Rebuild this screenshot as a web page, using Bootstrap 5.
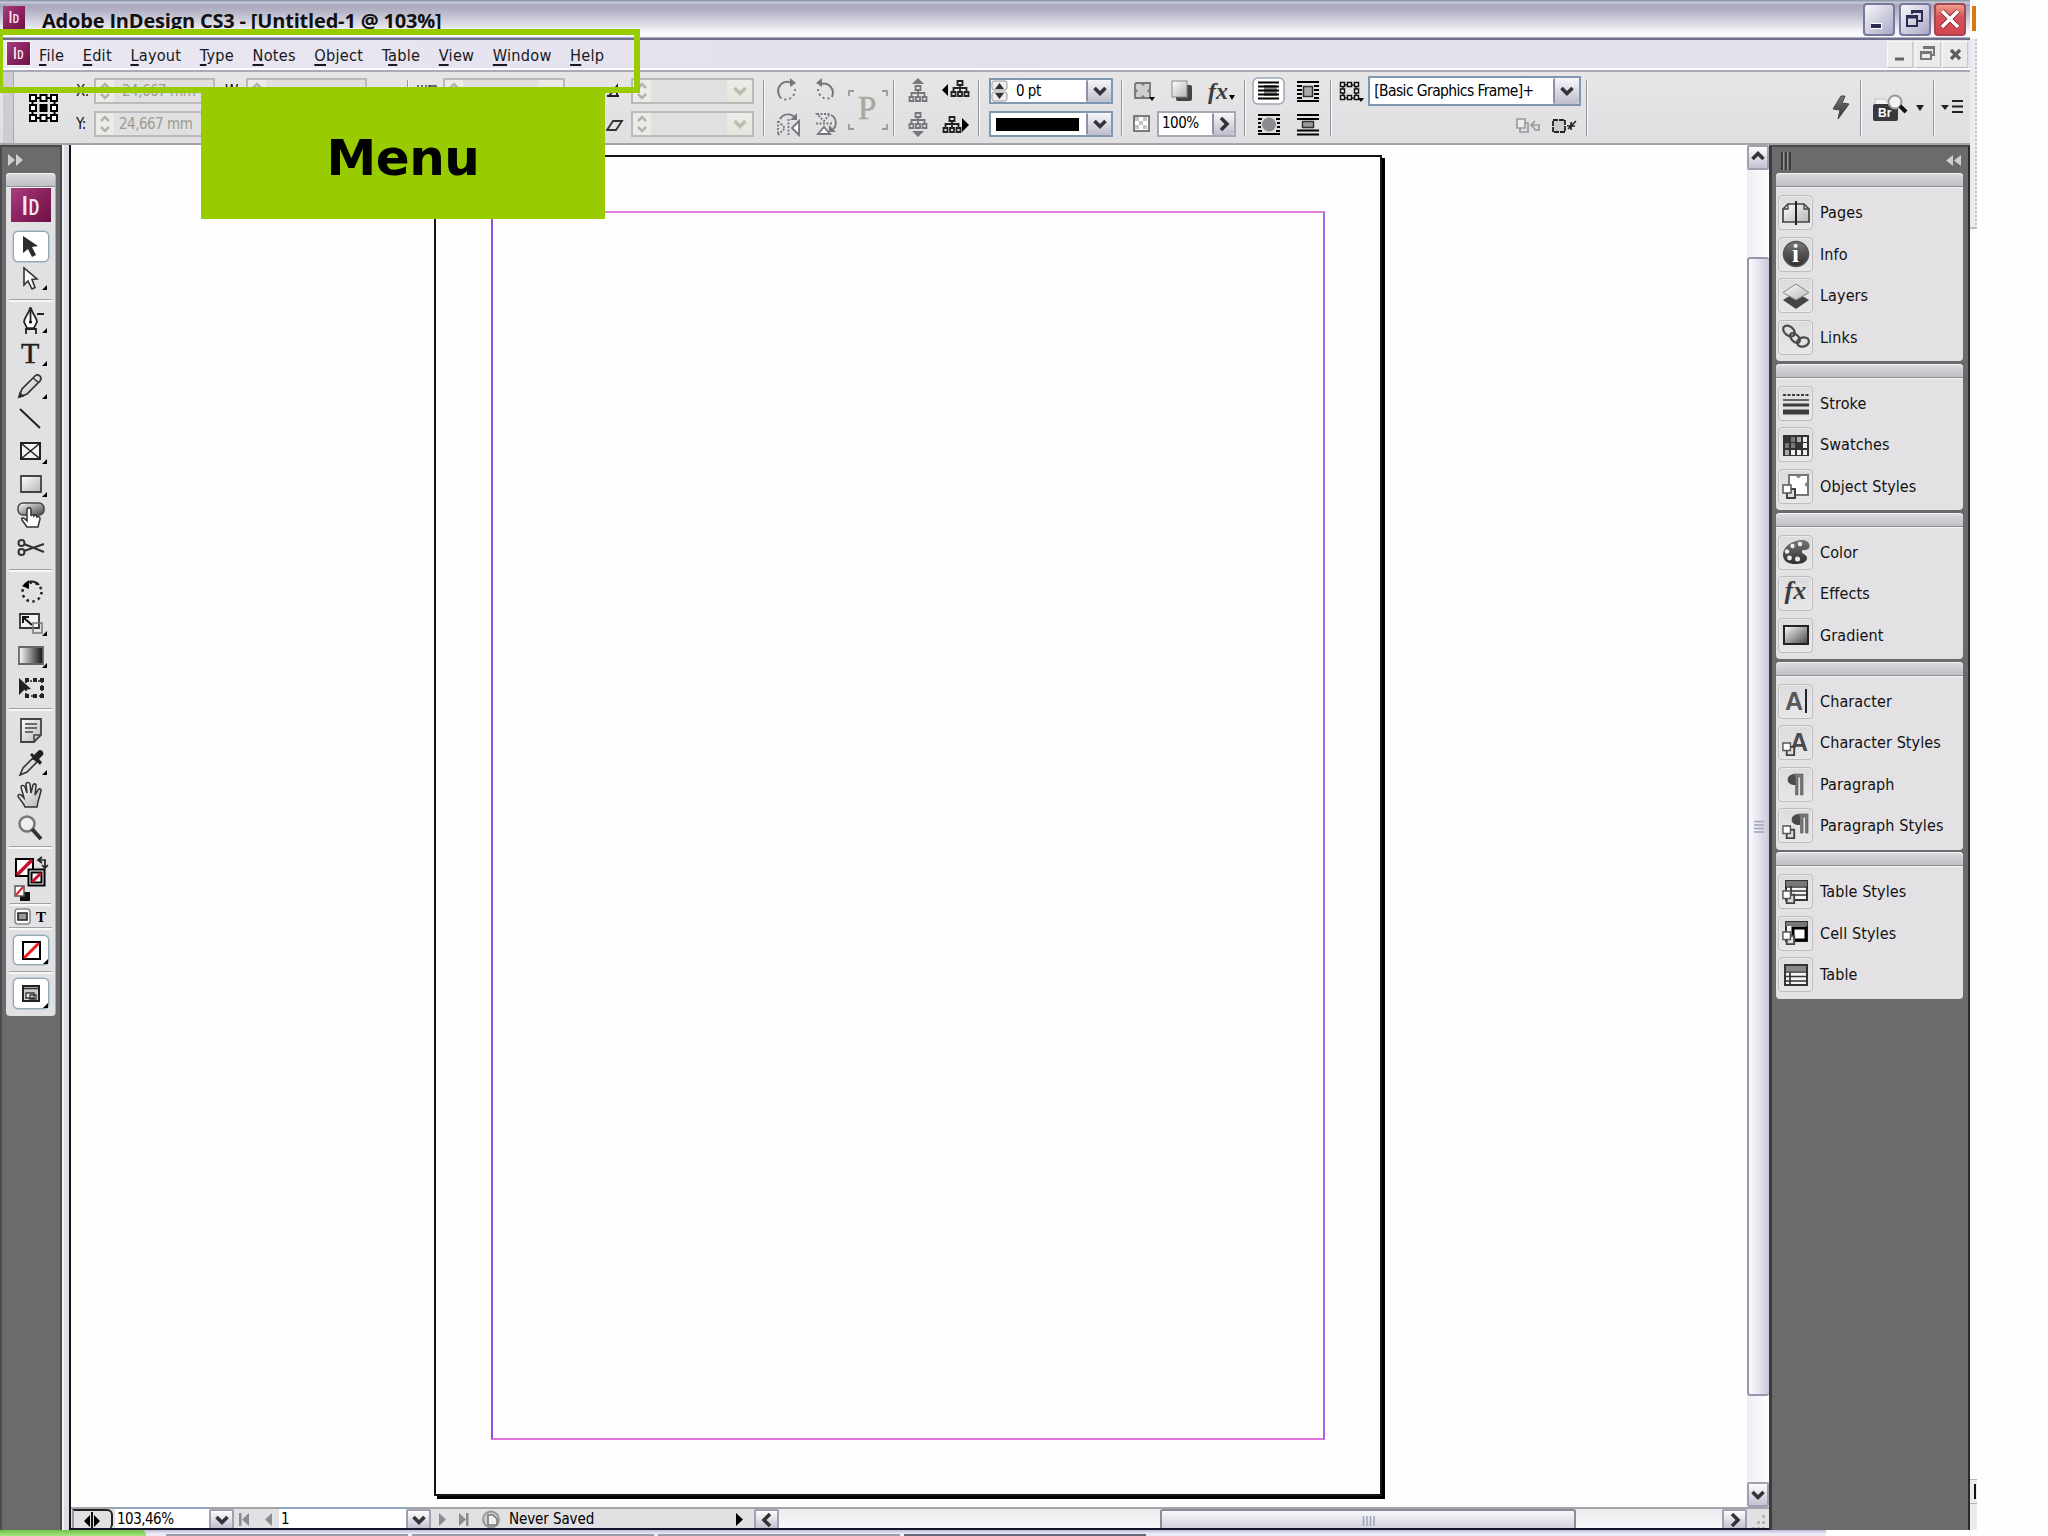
<!DOCTYPE html>
<html lang="en">
<head>
<meta charset="utf-8">
<title>Adobe InDesign CS3 - [Untitled-1 @ 103%]</title>
<link href="https://cdn.jsdelivr.net/npm/bootstrap@5.3.0/dist/css/bootstrap.min.css" rel="stylesheet">
<script src="https://cdn.jsdelivr.net/npm/bootstrap@5.3.0/dist/js/bootstrap.bundle.min.js"></script>
<style>
html,body{width:2048px;height:1536px;overflow:hidden;background:#fefefe}
body{font-family:"DejaVu Sans Condensed","DejaVu Sans","Noto Sans",sans-serif;font-stretch:condensed;font-size:16px;line-height:1.2;color:#111;letter-spacing:.1px}
svg{display:block;flex:none}
.app{width:1970px;height:1530px}
.titlebar{height:40px;background:linear-gradient(#8f9ba8 0,#8f9ba8 1px,#c9cdda 2px,#a9a8bb 5px,#b7b6c8 12px,#dcdce6 24px,#fdfdff 34px,#f4f4fa 37px,#6d6e8c 38px,#6d6e8c 40px);padding:3px 4px 0 4px}
.titlebar .cap{font:700 20px/24px "Open Sans","Noto Sans",sans-serif;letter-spacing:-.18px;margin:6px 0 0 17px;white-space:nowrap}
.winbtn{width:32px;height:33px;border-radius:4px;border:2px solid #77789c;background:linear-gradient(135deg,#f6f6fb,#c9c9dc 60%,#a9a9c6)}
.winbtn.close-x{border-color:#a34552;background:linear-gradient(#f0a08c,#d9525a 40%,#d2464f)}
.menubar{height:32px;background:linear-gradient(90deg,#eae7f2,#e1e1eb 50%,#e1e2ec);border-bottom:2px solid #a9aab5;box-shadow:inset 0 -2px #fff;padding:1px 2px 0 6px;color:#171722}
.menubar .entries{gap:18.600px;margin-left:8px;font-size:16.200px;letter-spacing:.22px;padding-top:2px}
.menubar u{text-underline-offset:3px;text-decoration-thickness:1.5px}
.mdi{width:26px;height:27px;background:#ebebec;border:1px solid #fafafa;border-right-color:#c9c9c9;border-bottom-color:#bbb}
.ctl{height:73px;background:linear-gradient(#e6e6e7,#dfdee1);border-bottom:2px solid #a4a4a8;padding-left:3px}
.ctl .grip{width:11px;background:#cdccd1;border-right:1px solid #aaa}
.grp{padding-top:6px;gap:7px}
.grp>div{height:26px}
.vsep{width:2px;height:56px;margin-top:8px;background:#96969c;border-right:1px solid #f8f8f8}
.fld{height:26px;border:2px solid #b9bab9;background:#dfe0df}
.fld.on{border-color:#8096b2;background:#fff}
.fld .spin{width:18px;background:#ebebe8}
.fld .drop{width:25px;height:100%;background:linear-gradient(#ecece8,#e5e5de);border-radius:2px}
.fld.on .drop{background:linear-gradient(#f7f7fb,#bdbdcc);border-left:2px solid #8f90a6}
.dim{color:#9b9b92}
.narrow{font-size:15px;letter-spacing:-.5px}
.work{height:1385px}
.dock{background:#6b6a6c}
.ldock{width:62px;border-left:2px solid #4b4a4c;border-right:2px solid #4b4a4c;border-top:2px solid #4b4a4c}
.tools{width:50px;height:843px;margin-left:4px;background:#e1e0e3;border-radius:4px;border-right:1px solid #aaa}
.phead{height:14px;background:linear-gradient(#dddce0,#c0bfc3);border-bottom:1px solid #8f8e92;box-shadow:inset 0 1px #f3f3f3,0 1px #f4f4f4;border-radius:4px 4px 0 0}
.idlogo{background:linear-gradient(135deg,#a8407c,#8b2260 50%,#6a1245);color:#f6e6f0;font-family:"Open Sans",sans-serif;font-weight:600;display:flex;align-items:center;justify-content:center;flex:none}
.idlogo i{font-style:normal;font-size:78%}
.hsep{height:3px;width:43px;background:#a1a1a5;border-bottom:2px solid #f7f7f7;flex:none}
.tb{width:36px;flex:none}
.tb.sel{background:#fff;border:1px solid #93a9b4;border-radius:5px;box-shadow:0 0 0 .5px #9fb1ba}
.strip{width:9px;background:#dddce3;border-left:2px solid #f4f4f6;border-right:2px solid #111}
.rdock{width:201px;border-left:3px solid #3b3a3c;border-right:2px solid #2a292b;border-top:2px solid #4b4a4c}
.pnl{width:187px;margin-left:4px;margin-bottom:2.500px;background:#e3e1e4;border-radius:4px}
.pitem{height:41.5px;padding-left:2px}
.pico{width:35px;height:35px;border:1px solid #bcbbbe;border-radius:4px;background:linear-gradient(#dcdbde,#e7e6e8);box-shadow:inset 0 0 0 1px #ebebec;margin-right:7px;flex:none;display:flex;align-items:center;justify-content:center}
.canvas-area{width:1677px;height:1361px;position:relative;background:#fefefe}
.sheet{position:absolute;left:363px;top:10px;width:948px;height:1341px;border:2px solid #151515;background:#fefefe;box-shadow:3px 3px 0 0 #000}
.margins{position:absolute;left:55px;top:54px;width:834px;height:1229px;border:solid 2px;border-color:#e67fde #a466ea #df74de #8b4fe2}
.vscroll{width:22px;background:linear-gradient(90deg,#eeedf4,#fdfdfe)}
.sbtn{background:linear-gradient(#fdfdfe,#c2c2d0);border:2px solid #a0a0b2;border-radius:2px;display:flex;align-items:center;justify-content:center;flex:none;color:#333338}
.drop{color:#333338}
.vthumb{height:1139px;background:linear-gradient(90deg,#fafafd,#e4e4ee 50%,#c8c8da);border:2px solid #9696ae;border-right:0;border-radius:3px}
.status{height:23px;background:#e1e0e3;border-top:2px solid #a4a5aa}
.track{background:linear-gradient(#ececee,#f8f9fc)}
.hthumb{width:416px;background:linear-gradient(#f7f7fb,#cfcedb);border:2px solid #8d8d98;border-bottom:0;border-radius:3px}
.field{background:#fff;border-top:2px solid #8fa7bf;margin-top:-2px;padding-bottom:2px}
.taskbar{height:6px;width:1826px;background:linear-gradient(#b9b9dc,#ecebf6 60%)}
.start{width:146px;background:linear-gradient(#6fc24a,#a5e67c);border-radius:0 5px 0 0}
.beyond{width:7px;background:#fbfbfc}
.frame-mark{position:absolute;left:-3px;top:29px;width:643px;height:64px;border:6px solid #9c0}
.callout-box{position:absolute;left:201px;top:92px;width:404px;height:127px;background:#9c0;color:#000;font:700 50px/1 "DejaVu Sans",sans-serif;font-stretch:normal;letter-spacing:-.5px;padding-top:5px}
.fxs{font:italic 700 22px/1 "Liberation Serif",serif;color:#3c3c40}
</style>
</head>
<body>
<svg width="0" height="0" class="position-absolute">
<defs>
<linearGradient id="gw" x1="0" y1="0" x2="1" y2="1"><stop offset="0" stop-color="#fff"/><stop offset="1" stop-color="#444"/></linearGradient>
<linearGradient id="gh" x1="0" y1="0" x2="1" y2="0"><stop offset="0" stop-color="#fff"/><stop offset="1" stop-color="#111"/></linearGradient>
<linearGradient id="gl" x1="0" y1="0" x2="1" y2="1"><stop offset="0" stop-color="#fff"/><stop offset="1" stop-color="#b5b5b8"/></linearGradient>
<linearGradient id="gd" x1="0" y1="0" x2="0" y2="1"><stop offset="0" stop-color="#777"/><stop offset="1" stop-color="#2f2f31"/></linearGradient>
<symbol id="dn" viewBox="0 0 16 12"><path d="M2.500 3L8 8.500 13.500 3" fill="none" stroke="currentColor" stroke-width="3.600"/></symbol>
<symbol id="sp" viewBox="0 0 14 22"><path d="M3 8l4-4 4 4M3 14l4 4 4-4" fill="none" stroke="#b3b3ad" stroke-width="2.5"/></symbol>
<symbol id="tree" viewBox="0 0 20 24"><path d="M7.500 7h5v4h-5zM1.500 18h4v4h-4zM8 18h4v4H8zM14.500 18h4v4h-4zM10 11v7M3.500 18v-4h13v4" fill="none" stroke="currentColor" stroke-width="1.800"/></symbol>
<symbol id="tri" viewBox="0 0 6 6"><path d="M6 0v6H0z"/></symbol>
<symbol id="sty" viewBox="0 0 16 16"><path d="M5 5h8v9H5z" fill="#ddd" stroke="#444" stroke-width="2"/><path d="M1 1h8v8H1z" fill="#fff" stroke="#555" stroke-width="1.500"/></symbol>
<symbol id="obj" viewBox="0 0 22 20"><path d="M3 2h14v15H2V3z" fill="#cfcfd0" stroke="#77777b" stroke-width="1.800"/><path d="M8 2l2 2 2-2M8 17l2-2 2 2M2 8l2 2-2 2M17 8l-2 2 2 2" fill="none" stroke="#77777b" stroke-width="1.300"/><path d="M16 16h6l-3 4z"/></symbol>
</defs>
</svg>

<div class="d-flex">
<div class="app d-flex flex-column">

  <header class="titlebar d-flex align-items-start">
    <div class="idlogo" style="width:22px;height:23px;margin:3px 0 0 -1px;font-size:16px"><span>I<i>D</i></span></div>
    <div class="cap">Adobe InDesign CS3 - [Untitled-1 @ 103%]</div>
    <div class="d-flex ms-auto" style="gap:3.500px">
      <div class="winbtn"><svg width="28" height="29"><path d="M6 21h11" stroke="#fff" stroke-width="6"/><path d="M6 21h10" stroke="#2b2c52" stroke-width="4"/></svg></div>
      <div class="winbtn"><svg width="28" height="29" fill="none" stroke="#2b2c52" stroke-width="2"><path d="M11 9V6h10v10h-4M11 7h10M6 11h10v10H6zM6 12.500h10"/></svg></div>
      <div class="winbtn close-x"><svg width="28" height="29"><path d="M6 6l16 16M22 6L6 22" stroke="#7c1f2a" stroke-width="5"/><path d="M6 6l16 16M22 6L6 22" stroke="#fff" stroke-width="3.600"/></svg></div>
    </div>
  </header>

  <nav class="menubar d-flex">
    <div class="idlogo border border-light" style="width:25px;height:25px;margin-top:0;font-size:16px"><span>I<i>D</i></span></div>
    <div class="entries d-flex align-items-center" style="height:27px">
      <span><u>F</u>ile</span><span><u>E</u>dit</span><span><u>L</u>ayout</span><span><u>T</u>ype</span><span><u>N</u>otes</span><span><u>O</u>bject</span><span>T<u>a</u>ble</span><span><u>V</u>iew</span><span><u>W</u>indow</span><span><u>H</u>elp</span>
    </div>
    <div class="d-flex ms-auto" style="gap:1.500px">
      <div class="mdi"><svg width="24" height="25"><path d="M7 17h9" stroke="#666669" stroke-width="3"/></svg></div>
      <div class="mdi"><svg width="24" height="25" fill="none" stroke="#77777a" stroke-width="2"><path d="M8 7V5h10v8h-3M8 6h10M5 10h10v7H5zM5 11h10"/></svg></div>
      <div class="mdi"><svg width="24" height="25"><path d="M8 8l9 9M17 8l-9 9" stroke="#5e5e61" stroke-width="3.200"/></svg></div>
    </div>
  </nav>

  <div class="ctl d-flex">
    <div class="grip"></div>
    <svg width="31" height="30" style="margin:21px 0 0 14px" fill="#fff" stroke="#000" stroke-width="2"><path d="M4.500 5h22v20h-22z" fill="none"/><path d="M2 2h6v6H2zM12.500 2h6v6h-6zM23 2h6v6h-6zM2 12h6v6H2zM23 12h6v6h-6zM2 22h6v6H2zM12.500 22h6v6h-6zM23 22h6v6h-6z"/><path d="M12.500 12h6v6h-6z" fill="#000"/></svg>
    <div class="grp d-flex flex-column" style="margin-left:17px">
      <div class="d-flex align-items-center"><span class="narrow" style="width:18px">X:</span><div class="fld d-flex align-items-center" style="width:121px"><div class="spin"><svg width="18" height="22"><use href="#sp"/></svg></div><span class="dim narrow ps-2">24,667 mm</span></div></div>
      <div class="d-flex align-items-center"><span class="narrow" style="width:18px">Y:</span><div class="fld d-flex align-items-center" style="width:121px"><div class="spin"><svg width="18" height="22"><use href="#sp"/></svg></div><span class="dim narrow" style="padding-left:5px">24,667 mm</span></div></div>
    </div>
    <div class="grp d-flex flex-column" style="margin-left:10px">
      <div class="d-flex align-items-center"><span class="narrow" style="width:21px">W:</span><div class="fld" style="width:121px"><div class="spin"><svg width="18" height="22"><use href="#sp"/></svg></div></div></div>
    </div>
    <div class="vsep" style="margin-left:40px"></div>
    <div class="grp" style="margin-left:7px"><div class="d-flex"><svg width="27" height="26" fill="none" stroke="#444" stroke-width="1.500"><path d="M1 8h14" stroke-dasharray="2 2"/><path d="M13 8h7v12h-7z"/></svg><div class="fld d-flex justify-content-between" style="width:122px"><div class="spin"><svg width="18" height="22"><use href="#sp"/></svg></div><div class="drop"></div></div></div></div>
    <div class="grp d-flex flex-column" style="margin-left:41px">
      <div class="d-flex"><svg width="25" height="26" fill="none" stroke="#222" stroke-width="2"><path d="M1 18h12M3 18l8-10v10"/></svg><div class="fld d-flex justify-content-between" style="width:123px"><div class="spin"><svg width="18" height="22"><use href="#sp"/></svg></div><div class="drop d-flex align-items-center justify-content-center" style="color:#bdbdb0"><svg width="16" height="12"><use href="#dn"/></svg></div></div></div>
      <div class="d-flex"><svg width="25" height="26" fill="none" stroke="#333" stroke-width="1.800"><path d="M1 19L7 10h9l-6 9z"/></svg><div class="fld d-flex justify-content-between" style="width:123px"><div class="spin"><svg width="18" height="22"><use href="#sp"/></svg></div><div class="drop d-flex align-items-center justify-content-center" style="color:#bdbdb0"><svg width="16" height="12"><use href="#dn"/></svg></div></div></div>
    </div>
    <div class="vsep" style="margin-left:9px"></div>
    <div class="grp d-flex flex-column" style="margin-left:11px">
      <div class="d-flex" style="gap:12px">
        <svg width="26" height="26" fill="none" stroke="#77777b" stroke-width="2"><path d="M4 19a9 9.500 0 0 1 13-13"/><path d="M19 11a9 9.500 0 0 1-15 8" stroke-dasharray="2 3"/><path d="M14 0l6 5-6 4z" fill="#77777b" stroke="none"/></svg>
        <svg width="26" height="26" fill="none" stroke="#77777b" stroke-width="2"><path d="M18 19A9 9.500 0 0 0 7 6"/><path d="M4 11a9 9.500 0 0 0 14 8" stroke-dasharray="2 3"/><path d="M8 0L2 5l6 4z" fill="#77777b" stroke="none"/></svg>
      </div>
      <div class="d-flex" style="gap:12px">
        <svg width="26" height="26" fill="none" stroke="#77777b" stroke-width="1.800"><path d="M2 10v14l7-7zM23 10v14l-7-7zM12.500 8v17" stroke-dasharray="2 1.500"/><path d="M23 10v14l-7-7z" fill="#fff"/><path d="M4 8c3-6 12-6 15-1"/><path d="M21 2v7h-7z" fill="#77777b" stroke="none"/></svg>
        <svg width="26" height="26" fill="none" stroke="#77777b" stroke-width="1.800"><path d="M3 3h13l-6 7zM2 12.500h16" stroke-dasharray="2 1.500"/><path d="M4 23h12l-6-7z" fill="#fff"/><path d="M17 4c6 3 6 11 2 14"/><path d="M22 21h-7v-7z" fill="#77777b" stroke="none"/></svg>
      </div>
    </div>
    <svg width="40" height="40" style="margin:18px 0 0 8px"><path d="M1 6V1h5M34 1h5v5M39 34v5h-5M6 39H1v-5" fill="none" stroke="#99999c" stroke-width="1.800"/><text x="10" y="29" font-family="Liberation Serif" font-size="33" fill="#a9a79a" stroke="#a9a79a" stroke-width=".5">P</text></svg>
    <div class="vsep" style="margin-left:5px"></div>
    <div class="grp d-flex flex-column" style="margin-left:13px">
      <div class="d-flex"><div style="color:#77777b"><svg width="22" height="26"><use href="#tree" x="0" y="1" width="20" height="24"/><path d="M4 6h12l-6-6z" fill="currentColor"/></svg></div><svg width="30" height="24" style="margin-left:12px;color:#222"><use href="#tree" x="8" y="-4" width="20" height="24"/><path d="M0 12l6-6v12z"/></svg></div>
      <div class="d-flex"><div style="color:#77777b"><svg width="22" height="26"><use href="#tree" x="0" y="-5" width="20" height="24"/><path d="M4 20h12l-6 6z" fill="currentColor"/></svg></div><svg width="30" height="24" style="margin-left:12px;color:#222"><use href="#tree" x="0" y="-1" width="20" height="24"/><path d="M27 14l-7-7v14z"/></svg></div>
    </div>
    <div class="vsep" style="margin-left:6px"></div>
    <div class="grp d-flex flex-column" style="margin-left:9px">
      <div class="fld on d-flex align-items-center" style="width:124px"><svg width="18" height="22" class="mx-0"><rect x="1" y="1" width="15" height="9" rx="2" fill="#eee" stroke="#999"/><rect x="1" y="12" width="15" height="9" rx="2" fill="#eee" stroke="#999"/><path d="M4 9l4.500-6L13 9zM4 13l4.500 6 4.500-6z" fill="#333"/></svg><span class="narrow text-black" style="padding-left:7px">0 pt</span><div class="drop ms-auto d-flex align-items-center justify-content-center"><svg width="16" height="12"><use href="#dn"/></svg></div></div>
      <div class="fld on d-flex align-items-center" style="width:124px"><div style="width:83px;height:13px;background:#000;margin-left:5px"></div><div class="drop ms-auto d-flex align-items-center justify-content-center"><svg width="16" height="12"><use href="#dn"/></svg></div></div>
    </div>
    <div class="vsep" style="margin-left:8px"></div>
    <div class="grp d-flex flex-column" style="margin-left:10px">
      <div class="d-flex align-items-center"><svg width="24" height="22"><use href="#obj" width="22" height="20" y="1"/></svg><svg width="22" height="22" style="margin-left:14px"><rect x="5" y="5" width="16" height="16" rx="2" fill="#444"/><rect x="1" y="1" width="15" height="16" fill="url(#gl)" stroke="#888"/></svg><span class="fxs" style="padding-left:15px;font-size:24px">fx</span><svg width="8" height="5" class="align-self-end mb-1"><path d="M1 0h6L4 5z"/></svg></div>
      <div class="d-flex align-items-center"><svg width="24" height="18"><rect x="1" y="1" width="15" height="15" fill="#fff" stroke="#555" stroke-width="1.500"/><path d="M2 2h4v4H2zM10 2h4v4h-4zM6 6h4v4H6zM2 10h4v4H2zM10 10h4v4h-4z" fill="#c4c4c8"/></svg><div class="fld on d-flex align-items-center" style="width:79px;border-color:#a4a8b3"><span class="narrow text-black" style="padding:0 0 2px 3px">100%</span><div class="drop ms-auto d-flex align-items-center justify-content-center" style="width:22px"><svg width="12" height="16"><path d="M3 2l6 6-6 6" fill="none" stroke="#333" stroke-width="3.500"/></svg></div></div></div>
    </div>
    <div class="vsep" style="margin-left:8px"></div>
    <div class="grp d-flex flex-column" style="margin-left:6px">
      <div class="d-flex" style="gap:9px"><svg width="33" height="28" style="margin-top:-1px"><rect x="1" y="1" width="31" height="26" rx="5" fill="#fff" stroke="#9aa8b8" stroke-width="1.500"/><path d="M12 8h13v11H12z" fill="#888"/><path d="M6 5.500h21M6 9.500h21M6 13.500h21M6 17.500h21M6 21.500h21" stroke="#000" stroke-width="2"/></svg><svg width="26" height="26" style="margin-left:1px"><path d="M2 4h22M2 23h22" stroke="#000" stroke-width="2"/><path d="M2 8h5M2 12h5M2 16h5M2 20h5M19 8h5M19 12h5M19 16h5M19 20h5" stroke="#000" stroke-width="1.800"/><rect x="8.500" y="8.500" width="9" height="10" fill="#aaa" stroke="#333" stroke-width="1.500"/></svg></div>
      <div class="d-flex" style="gap:12px"><svg width="28" height="26" style="margin-left:3px"><path d="M3 4h22M3 23h22" stroke="#000" stroke-width="2"/><path d="M3 8h4M3 12h3M3 16h3M3 20h4M21 8h4M22 12h3M22 16h3M21 20h4" stroke="#000" stroke-width="1.800"/><circle cx="14" cy="13.500" r="7" fill="#8b8b8f"/></svg><svg width="26" height="26"><path d="M2 4h22M2 8h22M2 19.500h22M2 23.500h22" stroke="#000" stroke-width="2"/><rect x="7.500" y="10.500" width="11" height="6" fill="#999" stroke="#333" stroke-width="1.500"/></svg></div>
    </div>
    <div class="vsep" style="margin-left:9px"></div>
    <div class="grp d-flex flex-column" style="margin-left:7px">
      <div class="d-flex"><svg width="29" height="26"><path d="M4 7h13v13H4z" fill="none" stroke="#222" stroke-width="1.500"/><g fill="#fff" stroke="#111" stroke-width="1.500"><path d="M1.500 4.500h4v4h-4zM8.500 4.500h4v4h-4zM15.500 4.500h4v4h-4zM1.500 11h4v4h-4zM15.500 11h4v4h-4zM1.500 17.500h4v4h-4zM8.500 17.500h4v4h-4zM15.500 17.500h4v4h-4z"/></g><path d="M19 20h6l-3 4z"/></svg><div class="fld on d-flex align-items-center" style="width:213px;height:30px;margin-top:-2px"><span class="text-black" style="padding-left:4px;font-size:15.500px;letter-spacing:-.6px">[Basic Graphics Frame]+</span><div class="drop ms-auto d-flex align-items-center justify-content-center" style="width:26px"><svg width="16" height="12"><use href="#dn"/></svg></div></div></div>
      <div class="d-flex justify-content-end pe-1" style="padding-top:7px"><svg width="26" height="17" fill="none" stroke="#9b9b9f" stroke-width="1.700"><path d="M4 5h8v9H4z"/><path d="M1 1h8v9H1z" fill="#eee"/><path d="M16 7h7v5h-5M19 3l-4 4 4 4"/></svg><svg width="26" height="17" style="margin-left:9px"><path d="M2 2h12v12H2z" fill="#ccc" stroke="#222" stroke-width="1.800" stroke-dasharray="5 1"/><path d="M16 8h8M20 4v8M17 11l8-8" stroke="#222" stroke-width="1.600"/></svg></div>
    </div>
    <div class="vsep" style="margin-left:5px"></div>
    <div class="ms-auto d-flex">
      <svg width="18" height="26" style="margin:23px 10px 0 0"><path d="M9 1L1 14l7 1-2 9L17 9l-7-1 3-7z" fill="url(#gd)" stroke="#444"/></svg>
      <div class="vsep"></div>
      <svg width="36" height="28" style="margin:22px 7px 0 11px"><path d="M2 5h10l2 3h10v5H2z" fill="#f4f4f4" stroke="#bbb"/><rect x="0" y="10" width="25" height="17" rx="2" fill="#39393b"/><text x="5" y="23" font-family="Liberation Sans" font-weight="700" font-size="12" fill="#fff">Br</text><circle cx="22" cy="8" r="6.500" fill="#f3f3f3" stroke="#999" stroke-width="2"/><path d="M27 12l6 6" stroke="#111" stroke-width="4"/></svg>
      <svg width="10" height="6" style="margin:33px 7px 0 0"><path d="M0 0h8L4 6z" fill="#222"/></svg>
      <div class="vsep"></div>
      <svg width="24" height="16" style="margin:27px 5px 0 6px"><path d="M0 6h8l-4 5z" fill="#222"/><path d="M11 2h11M11 7.500h11M11 13h11" stroke="#222" stroke-width="2"/></svg>
    </div>
  </div>

  <main class="work d-flex">
    <aside class="dock ldock">
      <svg width="20" height="26" style="margin-left:5px"><path d="M1 7l7 6-7 6zM9 7l7 6-7 6z" fill="#cfcfcf"/></svg>
      <div class="tools d-flex flex-column align-items-center">
        <div class="phead w-100"></div>
        <div class="idlogo" style="width:40px;height:34px;margin-top:1px;font-size:27px"><span>I<i>D</i></span></div>
        <div class="tb sel" style="height:31px;margin-top:9px"><svg width="34" height="30"><path d="M9 4v17l5-4 4 8 4-2-4-8 6-1z" fill="#2b2b2d"/></svg></div>
        <div class="tb" style="height:34px"><svg width="36" height="34"><path d="M11 6v17l4-4 4 8 3-1.500-3-8 5-.5z" fill="#f8f8f8" stroke="#333" stroke-width="1.600"/><use href="#tri" x="29" y="23" width="5" height="5"/></svg></div>
        <div class="hsep" style="margin-top:3px"></div>
        <div style="margin-top:3px">
          <svg class="tb" width="36" height="32.500"><path d="M17 3c-1 6-6 9-6 14l3 6h7l3-6c0-5-5-8-6-14z" fill="#fff" stroke="#222" stroke-width="1.700"/><path d="M17.500 5v11M12 24h11v5M13 29v-5" stroke="#222" stroke-width="1.800" fill="none"/><circle cx="17.500" cy="17" r="1.500"/><path d="M24 9h7" stroke="#222" stroke-width="2"/><use href="#tri" x="29" y="23" width="5" height="5"/></svg>
          <svg class="tb" width="36" height="32.500"><text x="8" y="25" font-family="Liberation Serif" font-size="30" fill="#222" stroke="#222" stroke-width=".5">T</text><use href="#tri" x="29" y="23" width="5" height="5"/></svg>
          <svg class="tb" width="36" height="32.500"><path d="M6 27l3-8L22 6c3-3 8 1 5 5L14 24z" fill="url(#gl)" stroke="#333" stroke-width="1.700"/><path d="M20 8l6 5M6 27l4-1-3-3z" stroke="#333" stroke-width="1.500"/><use href="#tri" x="29" y="24" width="5" height="5"/></svg>
          <svg class="tb" width="36" height="32.500"><path d="M7 6l20 19" stroke="#222" stroke-width="2"/></svg>
          <svg class="tb" width="36" height="32.500"><path d="M8 8h19v16H8z" fill="#f3f3f3" stroke="#222" stroke-width="2"/><path d="M9 9l17 14M26 9L9 23" stroke="#222" stroke-width="1.600"/><use href="#tri" x="29" y="24" width="5" height="5"/></svg>
          <svg class="tb" width="36" height="32.500"><path d="M8 8h20v16H8z" fill="url(#gl)" stroke="#444" stroke-width="1.800"/><use href="#tri" x="29" y="24" width="5" height="5"/></svg>
          <svg class="tb" width="36" height="32.500"><rect x="5" y="3" width="26" height="12" rx="5" fill="url(#gw)" stroke="#444" stroke-width="1.500"/><path d="M14 27l-5-7c-1-2 1-3 3-1l2 2V10c0-3 4-3 4 0v6c1-2 3-1 3 0 1-1 3-1 3 1 2-1 3 0 3 2l-2 8z" fill="#fff" stroke="#333" stroke-width="1.500"/></svg>
          <svg class="tb" width="36" height="32.500" fill="none" stroke="#333" stroke-width="2"><circle cx="8.500" cy="10" r="3"/><circle cx="8.500" cy="19" r="3"/><path d="M11 11l20 8M11 18l20-7"/></svg>
        </div>
        <div class="hsep" style="margin-top:4px"></div>
        <div style="margin-top:4px">
          <svg class="tb" width="36" height="32.500"><circle cx="19" cy="16" r="9.500" fill="none" stroke="#222" stroke-width="2.500" stroke-dasharray="2.500 3.500"/><path d="M12 8c4-4 11-3 14 1" fill="none" stroke="#222" stroke-width="2"/><path d="M9 10l7-6v9z"/></svg>
          <svg class="tb" width="36" height="32.500"><path d="M7 5h19v14H7z" fill="#f2f2f2" stroke="#333" stroke-width="1.800"/><path d="M19 16l-8-7M10 14V8h6" stroke="#111" stroke-width="2" fill="none"/><path d="M20 14h9v10h-9z" fill="none" stroke="#777" stroke-width="1.500"/><use href="#tri" x="29" y="22" width="5" height="5"/></svg>
          <svg class="tb" width="36" height="32.500"><path d="M6 6h24v17H6z" fill="url(#gh)" stroke="#666" stroke-width="1.800"/><use href="#tri" x="29" y="22" width="5" height="5"/></svg>
          <svg class="tb" width="36" height="32.500"><path d="M13 7h16v15H13z" fill="none" stroke="#222" stroke-width="1.600" stroke-dasharray="2 2"/><path d="M12 4h4v4h-4zM20 4h4v4h-4zM27 4h4v4h-4zM27 12h4v4h-4zM27 20h4v4h-4zM20 20h4v4h-4zM12 20h4v4h-4zM6 4v17l5-5 7-1z" fill="#222"/></svg>
        </div>
        <div class="hsep" style="margin-top:2px"></div>
        <div style="margin-top:3px">
          <svg class="tb" width="36" height="32.500"><path d="M8 5h20v16l-7 7H8z" fill="url(#gl)" stroke="#444" stroke-width="1.800"/><path d="M28 21h-7v7M12 10h12M12 14h12M12 18h8" fill="none" stroke="#444" stroke-width="1.500"/></svg>
          <svg class="tb" width="36" height="32.500"><path d="M7 28l3-7 10-10 4 4-10 10z" fill="#ddd" stroke="#333" stroke-width="1.600"/><path d="M17 8l10 10 2-3-3-3 4-4c2-3-3-7-5-4l-4 4-2-2z" fill="#222"/><use href="#tri" x="29" y="23" width="5" height="5"/></svg>
          <svg class="tb" width="36" height="32.500"><path d="M12 28c-2-5-6-8-7-11 0-2 3-2 4 0l2 2-3-11c0-2 3-2 4 0l2 6-1-9c0-2 3-2 4 0l1 9 2-8c1-2 4-1 3 1l-1 9 3-5c1-2 4-1 3 1-1 4-3 9-4 16z" fill="url(#gl)" stroke="#333" stroke-width="1.500"/></svg>
          <svg class="tb" width="36" height="32.500"><circle cx="14" cy="12" r="7.500" fill="#eee" stroke="#777" stroke-width="2.500"/><path d="M19 17l9 10" stroke="#333" stroke-width="4"/></svg>
        </div>
        <div class="hsep" style="margin-top:2px"></div>
        <svg width="36" height="50" style="margin-top:7px"><path d="M3 3h17v17H3z" fill="#fff" stroke="#000" stroke-width="2"/><path d="M4 19L19 4" stroke="#c8102e" stroke-width="3.500"/><path d="M15.500 13.500h16v16h-16z" fill="#fff" stroke="#000" stroke-width="2"/><path d="M18.500 16.500h10v10h-10z" fill="#fff" stroke="#000" stroke-width="2"/><path d="M19 26l9-9" stroke="#c8102e" stroke-width="3"/><path d="M26 4h6v7M29 1l-4 3 4 3M29 9l3 3 3-3" fill="none" stroke="#222" stroke-width="1.700"/><path d="M7 36h10v9H7z" fill="#111"/><path d="M2 30h9v10H2z" fill="#fff" stroke="#555" stroke-width="1.500"/><path d="M3 39l7-8" stroke="#e02030" stroke-width="2"/></svg>
        <div class="hsep" style="margin-top:-3px;width:41px"></div>
        <svg width="36" height="20" style="margin-top:1px"><rect x="2" y="2" width="15" height="15" rx="3" fill="#fff" stroke="#888" stroke-width="1.500"/><path d="M5 6h9v7H5z" fill="#999" stroke="#222" stroke-width="1.600"/><text x="23" y="15" font-family="Liberation Serif" font-weight="700" font-size="15">T</text></svg>
        <div class="hsep"></div>
        <div class="tb sel" style="height:30px;margin-top:5px"><svg width="34" height="28"><path d="M9 6h17v17H9z" fill="#fff" stroke="#000" stroke-width="2"/><path d="M10 22L25 7" stroke="#ee1c1c" stroke-width="3"/><use href="#tri" x="29" y="23" width="5" height="5"/></svg></div>
        <div class="hsep" style="margin-top:6px"></div>
        <div class="tb sel" style="height:31px;margin-top:4px"><svg width="34" height="30"><path d="M9 7h16v15H9z" fill="#ccc" stroke="#222" stroke-width="2"/><path d="M10 9.500h14M12 14h8v5h-8zM16 16h6v4h-6z" stroke="#333" stroke-width="1.300" fill="#eee"/><use href="#tri" x="29" y="24" width="5" height="5"/></svg></div>
      </div>
    </aside>
    <div class="strip"></div>

    <section class="d-flex flex-column" style="width:1698px">
      <div class="d-flex">
        <div class="canvas-area"><div class="sheet"><div class="margins"></div></div></div>
        <div class="vscroll d-flex flex-column" style="height:1362px">
          <div class="sbtn" style="height:25px"><svg width="16" height="12" style="transform:scaleY(-1);margin-bottom:3px"><use href="#dn"/></svg></div>
          <div style="height:87px"></div>
          <div class="vthumb d-flex align-items-center justify-content-center"><svg width="12" height="13"><path d="M1 1.500h10M1 5h10M1 8.500h10M1 12h10" stroke="#9da5b5" stroke-width="1.500"/></svg></div>
          <div class="flex-grow-1"></div>
          <div class="sbtn" style="height:25px"><svg width="16" height="12"><use href="#dn"/></svg></div>
        </div>
      </div>
      <footer class="status d-flex align-items-stretch">
        <div style="width:41px;margin-left:1px;border:2px solid #222;border-left-color:#999;border-radius:0 6px 6px 0;border-bottom:0"><svg width="36" height="19"><path d="M18 1v18" stroke="#111" stroke-width="2"/><path d="M16 4v12l-6-6zM20 4v12l6-6z"/></svg></div>
        <div class="field d-flex align-items-center narrow text-black" style="width:94px;margin-left:2px;padding-left:2px">103,46%</div>
        <div class="sbtn" style="width:25px"><svg width="16" height="12"><use href="#dn"/></svg></div>
        <svg width="45" height="21" fill="#8b8b90"><path d="M5 4h2.500v13H5zM15 4v13l-7-6.500zM38 4v13l-7-6.500z"/></svg>
        <div class="field d-flex align-items-center narrow text-black" style="width:127px;padding-left:2px">1</div>
        <div class="sbtn" style="width:25px"><svg width="16" height="12"><use href="#dn"/></svg></div>
        <svg width="50" height="21" fill="#8b8b90"><path d="M8 4v13l7-6.500zM28 4v13l7-6.500zM35 4h2.500v13H35z"/></svg>
        <svg width="20" height="21"><circle cx="10" cy="10.500" r="8" fill="#ccc" stroke="#99999c" stroke-width="2"/><path d="M7 6h5l4 4v6H7z" fill="#eee" stroke="#777" stroke-width="1.500"/></svg>
        <div class="d-flex align-items-center text-black" style="width:228px;padding:0 0 2px 8px;font-size:15px;letter-spacing:-.1px">Never Saved</div>
        <svg width="25" height="21"><path d="M7 4l7 6.500L7 17z"/></svg>
        <div class="sbtn" style="width:25px"><svg width="12" height="16"><path d="M9 2L3 8l6 6" fill="none" stroke="#333" stroke-width="3.500"/></svg></div>
        <div class="track" style="width:381px"></div>
        <div class="hthumb d-flex align-items-center justify-content-center"><svg width="13" height="10"><path d="M1.500 0v10M5 0v10M8.500 0v10M12 0v10" stroke="#9da5b5" stroke-width="1.500"/></svg></div>
        <div class="track flex-grow-1"></div>
        <div class="sbtn" style="width:25px"><svg width="12" height="16"><path d="M3 2l6 6-6 6" fill="none" stroke="#333" stroke-width="3.500"/></svg></div>
        <svg width="22" height="21"><path d="M15 6h3v3h-3zM10 12h3v3h-3zM15 12h3v3h-3zM5 18h3v3H5zM10 18h3v3h-3zM15 18h3v3h-3z" fill="#b5b8ae"/></svg>
      </footer>
      <div style="height:2px;background:#15152a;margin-top:-2px;z-index:1"></div>
    </section>

    <aside class="dock rdock">
      <div class="d-flex justify-content-between" style="height:26px;padding:5px 6px 0 9px"><svg width="12" height="18"><path d="M1 0v18M5 0v18M9 0v18" stroke="#2d2d2f" stroke-width="1.500"/><path d="M2.500 0v18M6.500 0v18" stroke="#999"/></svg><svg width="17" height="14" style="margin-top:2px"><path d="M8 1L1 6.500 8 12zM16 1L9 6.500l7 5.500z" fill="#cfcfcf"/></svg></div>
      <div class="pnl"><div class="phead mb-2"></div>
        <div class="pitem d-flex"><div class="pico"><svg width="28" height="28"><path d="M1 10l5-5h8v18H1zM27 10l-5-5h-8v18h13z" fill="url(#gl)" stroke="#444" stroke-width="1.700"/><path d="M14 2v24" stroke="#222" stroke-width="2"/><path d="M1 10h5V5M27 10h-5V5" fill="none" stroke="#444" stroke-width="1.300"/></svg></div><span class="pt-2">Pages</span></div>
        <div class="pitem d-flex"><div class="pico"><svg width="28" height="28"><circle cx="14" cy="14" r="12.500" fill="url(#gd)" stroke="#555" stroke-width="1.500"/><text x="10" y="22" font-family="Liberation Serif" font-weight="700" font-size="25" fill="#fff">i</text></svg></div><span class="pt-2">Info</span></div>
        <div class="pitem d-flex"><div class="pico"><svg width="28" height="28"><path d="M14 10l13 8-13 9-13-9z" fill="#444"/><path d="M14 2l13 8.500L14 18 1 10.500z" fill="url(#gl)" stroke="#888"/></svg></div><span class="pt-2">Layers</span></div>
        <div class="pitem d-flex"><div class="pico"><svg width="28" height="28" fill="none" stroke="#4a4a4d" stroke-width="2.200"><ellipse cx="7" cy="8" rx="6.500" ry="4.500" transform="rotate(40 7 8)"/><ellipse cx="13" cy="15" rx="6" ry="3.500" transform="rotate(45 13 15)"/><ellipse cx="21" cy="19" rx="6" ry="4.500" transform="rotate(-15 21 19)"/></svg></div><span class="pt-2">Links</span></div>
      </div>
      <div class="pnl"><div class="phead mb-2"></div>
        <div class="pitem d-flex"><div class="pico"><svg width="28" height="28" stroke="#3d3d40"><path d="M1 6h26" stroke-width="2" stroke-dasharray="3 1.500"/><path d="M1 11h26" stroke-width="1.500"/><path d="M1 16h26" stroke-width="3"/><path d="M1 23h26" stroke-width="5"/></svg></div><span class="pt-2">Stroke</span></div>
        <div class="pitem d-flex"><div class="pico"><svg width="28" height="28"><path d="M1 4h26v21H1z" fill="#333"/><path d="M9 6h4v5H9zM3 12h4v5H3zM9 12h4v5H9z" fill="#777"/><path d="M15 6h4v5h-4zM3 19h4v5H3z" fill="#aaa"/><path d="M21 6h4v5h-4zM21 12h4v5h-4zM9 19h4v5H9zM15 19h4v5h-4zM21 19h4v5h-4z" fill="#eee"/></svg></div><span class="pt-2">Swatches</span></div>
        <div class="pitem d-flex"><div class="pico"><svg width="28" height="28"><path d="M7 3h19v20H7z" fill="#fff" stroke="#77777a" stroke-width="2"/><path d="M14 3l2.500 2.500L19 3M26 10l-2.500 2.500L26 15" fill="none" stroke="#77777a" stroke-width="1.500"/><use href="#sty" x="0" y="12" width="16" height="16"/></svg></div><span class="pt-2">Object Styles</span></div>
      </div>
      <div class="pnl"><div class="phead mb-2"></div>
        <div class="pitem d-flex"><div class="pico"><svg width="28" height="28"><path d="M1 18C0 9 10 2 20 2c6 0 9 4 7 8-2 3-6 1-7 3-1 3 5 3 5 7 0 5-7 6-12 6-6 0-11-2-12-8z" fill="url(#gd)"/><g fill="#eee"><circle cx="18" cy="6" r="2.200"/><circle cx="10.500" cy="8" r="2.200"/><circle cx="5" cy="13.500" r="2.200"/><circle cx="7.500" cy="20" r="2.400"/><circle cx="15.500" cy="21" r="2.500"/></g></svg></div><span class="pt-2">Color</span></div>
        <div class="pitem d-flex"><div class="pico"><span class="fxs" style="font-size:26px;padding-bottom:5px">fx</span></div><span class="pt-2">Effects</span></div>
        <div class="pitem d-flex"><div class="pico"><svg width="28" height="28"><path d="M2 5h24v18H2z" fill="url(#gw)" stroke="#222" stroke-width="2"/></svg></div><span class="pt-2">Gradient</span></div>
      </div>
      <div class="pnl"><div class="phead mb-2"></div>
        <div class="pitem d-flex"><div class="pico"><svg width="28" height="28"><text x="3" y="23" font-family="Liberation Sans" font-weight="700" font-size="25" fill="#58585b">A</text><path d="M24 2v24" stroke="#222" stroke-width="2"/></svg></div><span class="pt-2">Character</span></div>
        <div class="pitem d-flex"><div class="pico"><svg width="28" height="28"><text x="8" y="22" font-family="Liberation Sans" font-weight="700" font-size="25" fill="#4a4a4d">A</text><use href="#sty" x="0" y="13" width="15" height="15"/></svg></div><span class="pt-2">Character Styles</span></div>
        <div class="pitem d-flex"><div class="pico"><svg width="28" height="28"><path d="M14 4v11C3 16 3 4 13 4z" fill="#4a4a4d"/><path d="M12 4h9v21h-2.500V7H16v18h-2.500V8z" fill="#77777a" stroke="#555" stroke-width=".6"/></svg></div><span class="pt-2">Paragraph</span></div>
        <div class="pitem d-flex"><div class="pico"><svg width="28" height="28"><path d="M18 2v11C7 14 7 2 17 2z" fill="#4a4a4d"/><path d="M16 2h10v19h-2.500V5H21v16h-2.500V6z" fill="#77777a" stroke="#555" stroke-width=".6"/><use href="#sty" x="0" y="13" width="15" height="15"/></svg></div><span class="pt-2">Paragraph Styles</span></div>
      </div>
      <div class="pnl"><div class="phead mb-2"></div>
        <div class="pitem d-flex"><div class="pico"><svg width="28" height="28"><path d="M4 3h21v19H4z" fill="#f4f4f4" stroke="#333" stroke-width="2"/><path d="M4 3h21v5H4z" fill="#777"/><path d="M4 9h21M9 13h16M9 17h16M9 8v14" stroke="#333" stroke-width="1.700"/><use href="#sty" x="0" y="12" width="15" height="15"/></svg></div><span class="pt-2">Table Styles</span></div>
        <div class="pitem d-flex"><div class="pico"><svg width="28" height="28"><path d="M4 3h21v19H4z" fill="#eee" stroke="#333" stroke-width="2"/><path d="M4 3h21v4H4z" fill="#777"/><path d="M11 9h13v12H11z" fill="#fff" stroke="#000" stroke-width="3"/><use href="#sty" x="0" y="12" width="15" height="15"/></svg></div><span class="pt-2">Cell Styles</span></div>
        <div class="pitem d-flex"><div class="pico"><svg width="28" height="28"><path d="M3 4h22v20H3z" fill="#f4f4f4" stroke="#333" stroke-width="2"/><path d="M4 5h20v5H4z" fill="#888"/><path d="M3 11h22M3 15.500h22M3 20h22M8 11v13" stroke="#333" stroke-width="1.700"/></svg></div><span class="pt-2">Table</span></div>
      </div>
    </aside>
  </main>
</div>

<div class="beyond d-flex flex-column">
  <div style="height:25px;width:4px;margin:6px 0 8px 2px;background:#d8790c"></div>
  <div style="height:190px;background:#ecebef;border-right:2px dotted #c4c4c8;border-bottom:2px solid #bbb"></div>
  <div style="height:1250px"></div>
  <div style="height:25px;background:#ecebef;border:solid #b5b5b9;border-width:1px 0;padding:4px 0 0 4px"><div style="width:2px;height:15px;background:#111"></div></div>
  <div style="height:26px;background:#ecebef"></div>
</div>
</div>

<div class="taskbar d-flex"><div class="start"></div><div class="d-flex align-items-end" style="gap:4px;padding-left:20px"><i style="width:242px;height:2px;background:#9d9da9"></i><i style="width:242px;height:2px;background:#9d9da9"></i><i style="width:242px;height:2px;background:#9d9da9"></i><i style="width:242px;height:2px;background:#66667a"></i></div></div>

<div class="frame-mark"></div>
<div class="callout-box d-flex align-items-center justify-content-center">Menu</div>
</body>
</html>
